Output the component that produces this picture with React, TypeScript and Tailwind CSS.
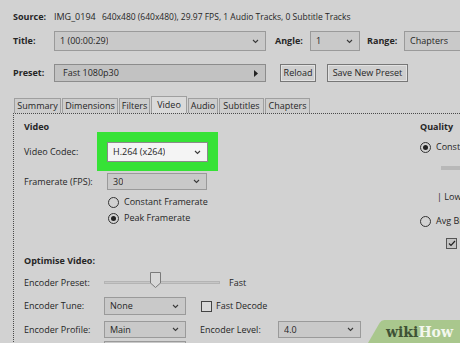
import React from 'react';

const Chevron = () => (
  <svg width="7" height="5" viewBox="0 0 7 5" className="shrink-0">
    <path d="M1 1l2.5 2.5L6 1" fill="none" stroke="#3a3a3a" strokeWidth="1.1" />
  </svg>
);

const Combo = ({ value = '', className = '', light = false }: { value?: string; className?: string; light?: boolean }) => (
  <div
    className={`flex shrink-0 items-center justify-between border pl-[5px] pr-[6px] ${
      light ? 'border-[#8a8a8a] bg-[#f4f4f4]' : 'border-[#9a9a9a] bg-[#c9c9c9]'
    } ${className}`}
  >
    <span className="truncate">{value}</span>
    <Chevron />
  </div>
);

const Radio = ({ checked = false }: { checked?: boolean }) => (
  <div className="flex h-[11px] w-[11px] shrink-0 items-center justify-center rounded-full border border-[#333]">
    {checked && <div className="h-[5px] w-[5px] rounded-full bg-[#222]" />}
  </div>
);

const tabs = [
  { name: 'Summary', w: 'w-[47px]' },
  { name: 'Dimensions', w: 'w-[56px]' },
  { name: 'Filters', w: 'w-[31px]' },
  { name: 'Video', w: 'w-[36px]', active: true },
  { name: 'Audio', w: 'w-[30px]' },
  { name: 'Subtitles', w: 'w-[45px]' },
  { name: 'Chapters', w: 'w-[45px]' },
];

export default function App() {
  return (
    <div
      className="relative flex h-[343px] w-[460px] flex-col overflow-hidden bg-[#d2d2d2] text-[9px] leading-[12px] text-[#262626]"
      style={{ fontFamily: '"Open Sans", "Noto Sans", sans-serif' }}
    >
      {/* source */}
      <div className="mt-[11px] flex h-[12px] items-center pl-[13px]">
        <span className="w-[41px] shrink-0 font-bold">Source:</span>
        <span className="w-[48px] shrink-0">IMG_0194</span>
        <span className="whitespace-nowrap text-[8.5px]">640x480 (640x480), 29.97 FPS, 1 Audio Tracks, 0 Subtitle Tracks</span>
      </div>

      {/* title / angle / range */}
      <div className="mt-[8px] flex h-[20px] items-center pl-[13px]">
        <span className="w-[41px] shrink-0 font-bold">Title:</span>
        <Combo value="1  (00:00:29)" className="h-[20px] w-[212px] whitespace-pre" />
        <span className="ml-[9px] w-[35px] shrink-0 font-bold">Angle:</span>
        <Combo value="1" className="h-[20px] w-[50px]" />
        <span className="ml-[7px] w-[37px] shrink-0 font-bold">Range:</span>
        <Combo value="Chapters" className="h-[20px] w-[80px]" />
      </div>

      {/* preset */}
      <div className="mt-[13px] flex h-[18px] items-center pl-[13px]">
        <span className="w-[41px] shrink-0 font-bold">Preset:</span>
        <div className="flex h-[18px] w-[212px] shrink-0 items-center justify-between border border-[#8c8c8c] bg-[#c2c2c2] pl-[8px] pr-[7px]">
          <span>Fast 1080p30</span>
          <svg width="4" height="7" viewBox="0 0 4 7">
            <path d="M0 0L4 3.5L0 7Z" fill="#222" />
          </svg>
        </div>
        <button className="ml-[14px] flex h-[18px] w-[36px] shrink-0 items-center justify-center border border-[#777] bg-[#cfcfcf] shadow-[inset_0_0_0_1px_#e2e2e2]">
          Reload
        </button>
        <button className="ml-[11px] flex h-[18px] w-[81px] shrink-0 items-center justify-center border border-[#777] bg-[#cfcfcf] shadow-[inset_0_0_0_1px_#e2e2e2]">
          Save New Preset
        </button>
      </div>

      {/* tabs */}
      <div className="mt-[14px] flex h-[17px] items-end gap-[1px] pl-[14px]">
        {tabs.map((t) => (
          <div
            key={t.name}
            className={`flex shrink-0 items-center justify-center border border-b-0 border-[#9f9f9f] ${t.w} ${
              t.active ? 'h-[17px] bg-[#dadada]' : 'h-[15px] bg-[#cdcdcd]'
            }`}
          >
            {t.name}
          </div>
        ))}
      </div>

      {/* panel */}
      <div className="ml-[13px] flex flex-1 border-l border-t border-dotted border-[#4a4a4a]">
        {/* left column */}
        <div className="flex w-[406px] shrink-0 flex-col pl-[10px]">
          <div className="mt-[7px] flex h-[11px] items-center font-bold">Video</div>

          <div className="flex items-center">
            <span className="w-[73px] shrink-0">Video Codec:</span>
            <div className="bg-[#36e236] px-[10px] pb-[9px] pt-[10px]">
              <Combo value="H.264 (x264)" light className="h-[20px] w-[101px]" />
            </div>
          </div>

          <div className="mt-[2px] flex h-[17px] items-center">
            <span className="w-[83px] shrink-0">Framerate (FPS):</span>
            <Combo value="30" className="h-[17px] w-[100px]" />
          </div>

          <div className="ml-[84px] mt-[6px] flex h-[12px] items-center gap-[5px]">
            <Radio />
            <span>Constant Framerate</span>
          </div>
          <div className="ml-[84px] mt-[4px] flex h-[12px] items-center gap-[5px]">
            <Radio checked />
            <span>Peak Framerate</span>
          </div>

          <div className="mt-[31px] flex h-[12px] items-center font-bold">Optimise Video:</div>

          <div className="mt-[8px] flex h-[16px] items-center">
            <span className="w-[80px] shrink-0">Encoder Preset:</span>
            <div className="relative h-[16px] w-[116px] shrink-0">
              <div className="absolute left-0 right-0 top-[6px] h-[3px] border border-[#b4b4b4] bg-[#c6c6c6]" />
              <svg className="absolute left-[46px] top-[-3px]" width="11" height="16" viewBox="0 0 11 16">
                <path d="M0.5 0.5H10.5V11L5.5 15.5L0.5 11Z" fill="#d8d8d8" stroke="#7a7a7a" />
              </svg>
            </div>
            <span className="ml-[9px]">Fast</span>
          </div>

          <div className="mt-[6px] flex h-[18px] items-center">
            <span className="w-[80px] shrink-0">Encoder Tune:</span>
            <Combo value="None" className="h-[18px] w-[82px]" />
            <div className="ml-[15px] h-[11px] w-[11px] shrink-0 border border-[#444] bg-[#dadada]" />
            <span className="ml-[4px]">Fast Decode</span>
          </div>

          <div className="mt-[6px] flex h-[17px] items-center">
            <span className="w-[80px] shrink-0">Encoder Profile:</span>
            <Combo value="Main" className="h-[17px] w-[82px]" />
            <span className="ml-[14px] w-[78px] shrink-0">Encoder Level:</span>
            <Combo value="4.0" className="h-[17px] w-[83px]" />
          </div>

          <div className="ml-[80px] mt-[3px] flex h-[17px]">
            <Combo className="h-[17px] w-[82px]" />
          </div>
        </div>

        {/* right column: quality */}
        <div className="flex min-w-0 flex-1 flex-col overflow-hidden">
          <div className="mt-[7px] flex h-[11px] items-center font-bold">Quality</div>
          <div className="mt-[9px] flex h-[12px] items-center gap-[5px] whitespace-nowrap">
            <Radio checked />
            <span>Constant Quality</span>
          </div>
          <div className="ml-[21px] mt-[13px] h-[4px] w-[40px] bg-[#b8b8b8]" />
          <div className="ml-[17px] mt-[21px] flex h-[12px] items-center whitespace-nowrap">| Lower Quality</div>
          <div className="mt-[12px] flex h-[12px] items-center gap-[5px] whitespace-nowrap">
            <Radio />
            <span>Avg Bitrate (kbps):</span>
          </div>
          <div className="ml-[26px] mt-[11px] flex h-[11px] w-[11px] shrink-0 items-center justify-center border border-[#555] bg-[#c4c4c4]">
            <svg width="8" height="7" viewBox="0 0 8 7">
              <path d="M1 3.5L3 5.5L7 1" fill="none" stroke="#222" strokeWidth="1.2" />
            </svg>
          </div>
        </div>
      </div>

      {/* wikiHow watermark */}
      <div className="absolute bottom-0 right-0 h-[23px] w-[92px]">
        <div className="absolute bottom-0 left-0 h-[23px] w-[110px] origin-bottom-left skew-x-[-30deg] rounded-tl-[3px] bg-[#a9c78d]" />
        <div
          className="absolute bottom-[3px] left-[18px] whitespace-nowrap text-[14px] font-bold leading-[16px]"
          style={{ fontFamily: '"DejaVu Serif", serif' }}
        >
          <span className="text-[#3f5235]">wiki</span>
          <span className="text-[#f3f7ee]">How</span>
        </div>
      </div>
    </div>
  );
}
